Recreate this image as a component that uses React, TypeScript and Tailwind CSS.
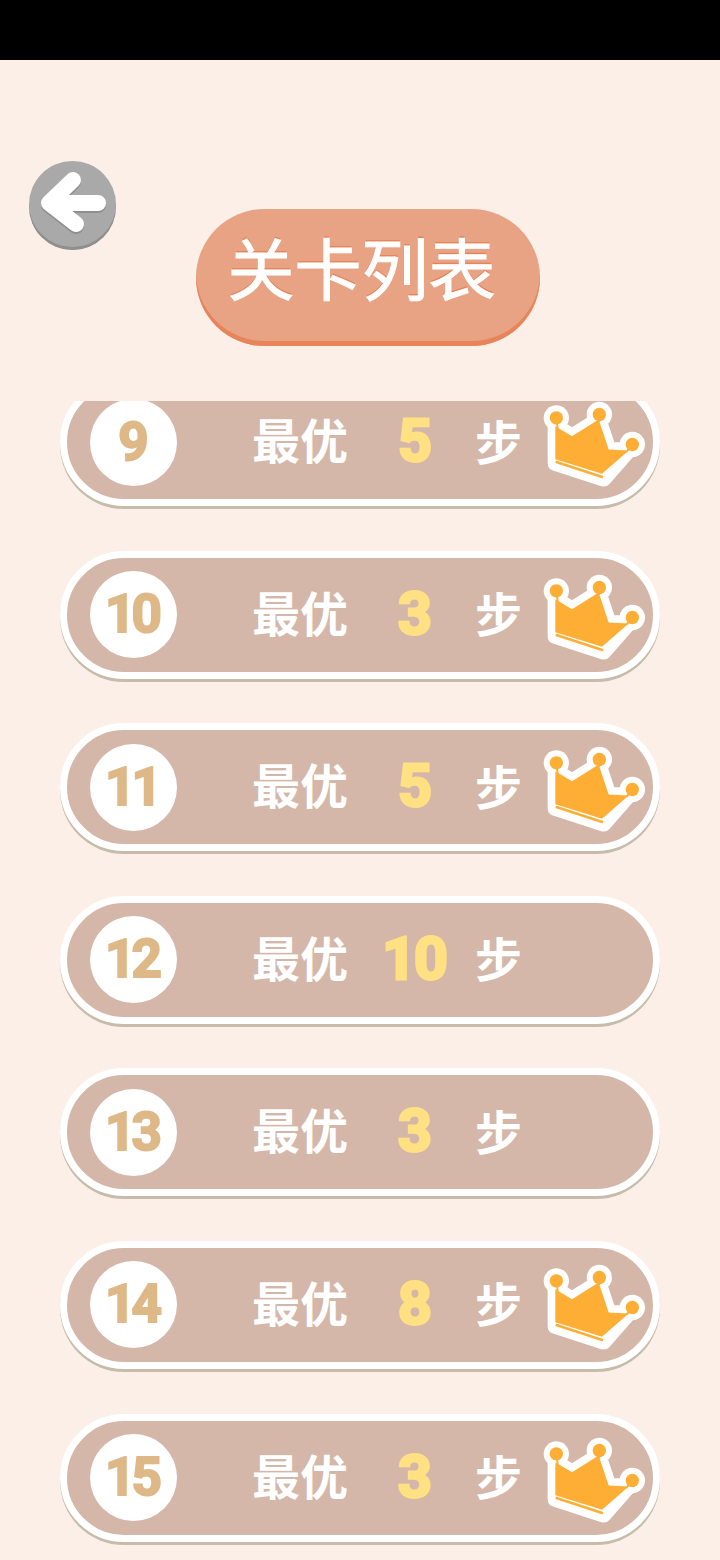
const rows = [
  { n: 9, best: 5, crown: true },
  { n: 10, best: 3, crown: true },
  { n: 11, best: 5, crown: true },
  { n: 12, best: 10, crown: false },
  { n: 13, best: 3, crown: false },
  { n: 14, best: 8, crown: true },
  { n: 15, best: 3, crown: true },
];

function Crown() {
  const outline = "M165 105 L215 135 L295 85 L325 175 L385 178 L310 263 L165 216 Z";
  const body = "M165 105 L215 135 L295 85 L325 175 L385 178 L305 248 L165 204 Z";
  return (
    <svg viewBox="0 0 330 290" className="absolute left-[475px] top-[16px] h-[97px] w-[110px]">
      <g transform="translate(-125 -30)">
        <g fill="#fff" stroke="#fff" strokeLinejoin="round">
          <path d={outline} strokeWidth="46" />
          <circle cx="168" cy="80" r="38" strokeWidth="0" />
          <circle cx="297" cy="70" r="38" strokeWidth="0" />
          <circle cx="396" cy="160" r="38" strokeWidth="0" />
        </g>
        <path d={body} fill="#ffae35" />
        <path d="M166 212 L308 258" stroke="#ffae35" strokeWidth="8" />
        <path d="M168 80 L172 112 M297 70 L296 92 M396 160 L378 182" stroke="#ffae35" strokeWidth="6" />
        <circle cx="168" cy="80" r="20" fill="#ffae35" />
        <circle cx="297" cy="70" r="20" fill="#ffae35" />
        <circle cx="396" cy="160" r="20" fill="#ffae35" />
      </g>
    </svg>
  );
}

function Back() {
  return (
    <div className="ml-[29px] h-[89px] w-[87px] rounded-full bg-[#a9a9a9] shadow-[inset_0_-3px_0_#8f8f8f]">
      <svg viewBox="0 0 87 89" className="h-[89px] w-[87px]">
        <path d="M44 21 L20 44 L47 65 M22 44 H69" stroke="#8f8f8f" strokeWidth="16" strokeLinecap="round" strokeLinejoin="round" fill="none" />
        <path d="M44 19 L20 42 L47 63 M22 42 H69" stroke="#fff" strokeWidth="16" strokeLinecap="round" strokeLinejoin="round" fill="none" />
      </svg>
    </div>
  );
}

function Row({ n, best, crown }: { n: number; best: number; crown: boolean }) {
  return (
    <div className="relative flex h-[128px] w-[600px] shrink-0 items-center rounded-full border-[7px] border-white bg-[#d4b7a8] pl-[23px] shadow-[0_3px_0_#c6bcab]">
      <div className="flex h-[87px] w-[87px] shrink-0 items-center justify-center rounded-full bg-white font-['Roboto',sans-serif] text-[53px] font-bold leading-none tracking-[-4px] text-[#deb887] [-webkit-text-stroke:2px_#deb887]">
        <span className="-ml-[4px]">{n}</span>
      </div>
      <span className="ml-[75px] pb-[8px] text-[48px] font-bold leading-none text-white">最优</span>
      <span className="ml-[5px] w-[122px] pb-[3px] text-center font-['Roboto',sans-serif] text-[59px] font-bold leading-none tracking-[-2px] text-[#ffe082] [-webkit-text-stroke:3px_#ffe082]">
        {best}
      </span>
      <span className="pb-[6px] text-[47px] font-bold leading-none text-white">步</span>
      {crown && <Crown />}
    </div>
  );
}

export default function App() {
  return (
    <div className="flex h-[1560px] w-[720px] flex-col overflow-hidden bg-[#fbefe7] font-['Noto_Sans_CJK_SC',sans-serif]">
      <div className="h-[60px] shrink-0 bg-black" />
      <div className="mt-[101px] shrink-0">
        <Back />
      </div>
      <div className="-mt-[41px] ml-[196px] flex h-[137px] w-[344px] shrink-0 items-center justify-center rounded-full bg-[#e7a384] pb-[25px] pr-[13px] text-[67px] font-normal leading-none text-white shadow-[inset_0_-5px_0_#e8845a] [-webkit-text-stroke:1px_#ffffff] [text-shadow:0_-2px_0_#e8845a]">
        关卡列表
      </div>
      <div className="mt-[55px] min-h-0 flex-1 overflow-hidden">
        <div className="-mt-[23px] ml-[60px] flex flex-col gap-[44.6px]">
          {rows.map((r) => (
            <Row key={r.n} {...r} />
          ))}
        </div>
      </div>
    </div>
  );
}
